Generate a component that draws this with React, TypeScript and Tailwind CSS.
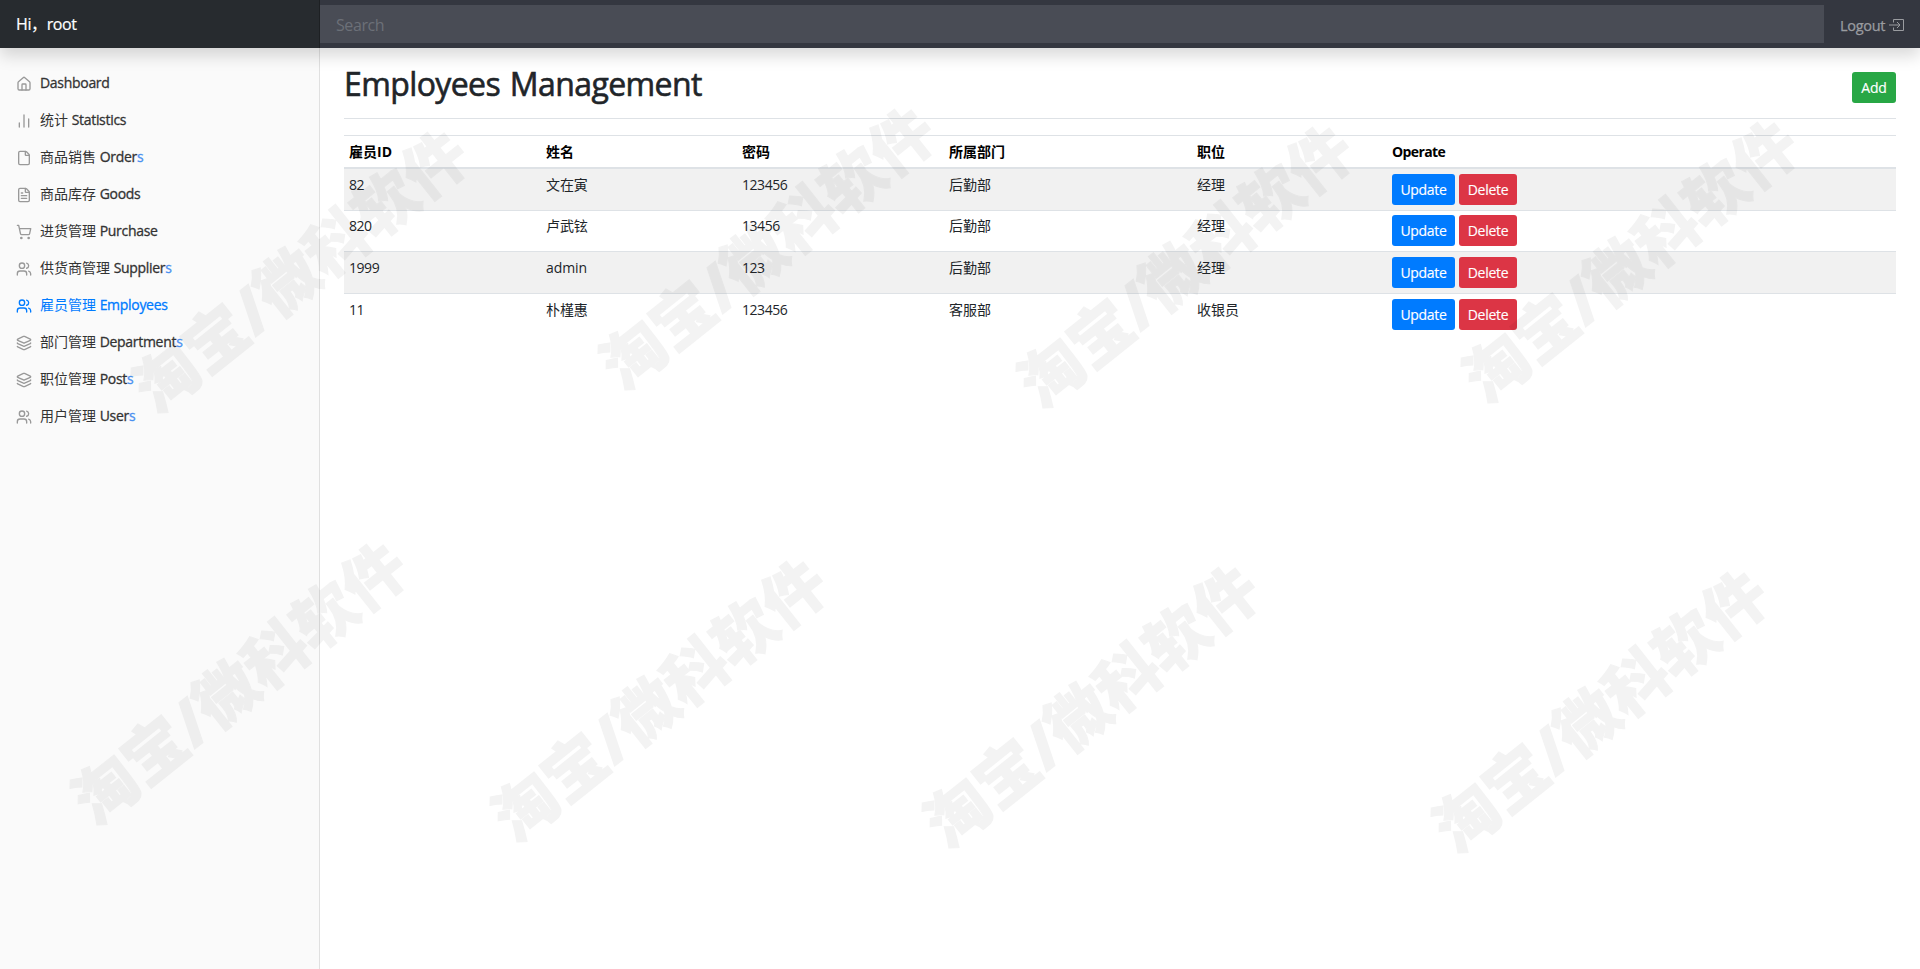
import { BarChart2, File, FileText, Home, Layers, ShoppingCart, Users } from 'lucide-react';
import clsx from 'clsx';

const NAV_ITEMS = [
  { icon: Home, zh: '', label: 'Dashboard', suffix: '' },
  { icon: BarChart2, zh: '统计', label: 'Statistics', suffix: '' },
  { icon: File, zh: '商品销售', label: 'Order', suffix: 's' },
  { icon: FileText, zh: '商品库存', label: 'Goods', suffix: '' },
  { icon: ShoppingCart, zh: '进货管理', label: 'Purchase', suffix: '' },
  { icon: Users, zh: '供货商管理', label: 'Supplier', suffix: 's' },
  { icon: Users, zh: '雇员管理', label: 'Employees', suffix: '', active: true },
  { icon: Layers, zh: '部门管理', label: 'Department', suffix: 's' },
  { icon: Layers, zh: '职位管理', label: 'Post', suffix: 's' },
  { icon: Users, zh: '用户管理', label: 'User', suffix: 's' },
];

const COLUMNS = [
  { label: '雇员ID', className: 'w-[197px]' },
  { label: '姓名', className: 'w-[196px]' },
  { label: '密码', className: 'w-[207px]' },
  { label: '所属部门', className: 'w-[248px]' },
  { label: '职位', className: 'w-[195px]' },
  { label: 'Operate', className: 'tracking-[-0.6px]' },
];

const EMPLOYEES = [
  { id: '82', name: '文在寅', password: '123456', department: '后勤部', post: '经理' },
  { id: '820', name: '卢武铉', password: '13456', department: '后勤部', post: '经理' },
  { id: '1999', name: 'admin', password: '123', department: '后勤部', post: '经理' },
  { id: '11', name: '朴槿惠', password: '123456', department: '客服部', post: '收银员' },
];

const WATERMARKS = [
  { x: 300, y: 270 },
  { x: 767, y: 247 },
  { x: 1185, y: 265 },
  { x: 1630, y: 260 },
  { x: 239, y: 682 },
  { x: 659, y: 699 },
  { x: 1091, y: 705 },
  { x: 1600, y: 710 },
];

function LogoutIcon() {
  return (
    <svg width="16" height="14" viewBox="0 0 16 14" fill="none" stroke="currentColor" strokeWidth="1">
      <path d="M4.5 4.5v-3h10v11h-10v-3" />
      <path d="M0 7h10.5M8 4l3 3-3 3" />
    </svg>
  );
}

function Header() {
  return (
    <header className="relative z-10 flex h-12 items-center bg-[#343740] shadow-[0_8px_16px_rgba(0,0,0,0.15)]">
      <div className="flex h-12 w-[320px] items-center bg-[#272b2f] px-4 text-base tracking-[-0.4px] text-white shadow-[inset_-1px_0_0_rgba(0,0,0,0.25)] [-webkit-text-stroke:0.2px]">
        Hi，root
      </div>
      <input
        type="text"
        placeholder="Search"
        className="h-[38px] flex-1 bg-[#494c55] px-4 pt-0.5 text-base tracking-[-0.4px] text-white outline-none placeholder:text-[#6c7078]"
      />
      <a
        href="#"
        className="flex w-24 items-center gap-1 pt-0.5 pl-4 text-[14.5px] tracking-[-0.3px] text-[#9a9ca0] [-webkit-text-stroke:0.25px]"
      >
        Logout
        <LogoutIcon />
      </a>
    </header>
  );
}

function Sidebar() {
  return (
    <nav className="w-[320px] bg-[#fafafa] pt-4 shadow-[inset_-1px_0_0_rgba(0,0,0,0.1)]">
      {NAV_ITEMS.map((item) => {
        const Icon = item.icon;
        return (
          <a
            key={item.label}
            href="#"
            className={clsx('flex h-[37px] items-center px-4', item.active ? 'text-[#007bff]' : 'text-[#333]')}
          >
            <Icon className={clsx('mt-0.5 mr-2 h-4 w-4', !item.active && 'text-[#999]')} />
            <span>
              {item.zh && `${item.zh} `}
              <span className="tracking-[-0.3px] [-webkit-text-stroke:0.3px]">
                {item.label}
                {item.suffix && <span className="text-[#4a90f0]">{item.suffix}</span>}
              </span>
            </span>
          </a>
        );
      })}
    </nav>
  );
}

function EmployeeTable() {
  return (
    <table className="w-full table-fixed border-separate border-spacing-0 text-left text-[#212529]">
      <thead>
        <tr className="h-[34px]">
          {COLUMNS.map((c) => (
            <th key={c.label} className={clsx('border-t border-b-2 border-[#dee2e6] px-[5px] py-0 font-bold text-black', c.className)}>
              {c.label}
            </th>
          ))}
        </tr>
      </thead>
      <tbody className="[&_td]:border-[#dee2e6] [&_td]:px-[5px] [&_td]:pb-0 [&_td]:align-top [&_tr:nth-child(odd)]:bg-[#f1f1f1] [&_tr:not(:last-child)_td]:border-b">
        {EMPLOYEES.map((e, i) => (
          <tr key={e.id} className={i === 1 ? 'h-[41px] [&_td]:pt-1' : 'h-[42px] [&_td]:pt-[5px]'}>
            <td className="tracking-[-0.45px]">{e.id}</td>
            <td className="tracking-[-0.1px]">{e.name}</td>
            <td className="tracking-[-0.45px]">{e.password}</td>
            <td>{e.department}</td>
            <td>{e.post}</td>
            <td>
              <div className="flex gap-1 tracking-[-0.3px] text-white [-webkit-text-stroke:0.15px]">
                <button type="button" className="h-[31px] w-[63px] rounded-[3px] bg-[#007bff]">
                  Update
                </button>
                <button type="button" className="h-[31px] w-[58px] rounded-[3px] bg-[#dc3545]">
                  Delete
                </button>
              </div>
            </td>
          </tr>
        ))}
      </tbody>
    </table>
  );
}

function Watermarks() {
  return (
    <div className="pointer-events-none absolute inset-0 z-20 overflow-hidden">
      {WATERMARKS.map((w) => (
        <div
          key={`${w.x}-${w.y}`}
          className="absolute -translate-x-1/2 -translate-y-1/2 -rotate-[38.5deg] text-[63px] leading-none font-black whitespace-nowrap text-black opacity-[0.045] [-webkit-text-stroke:1px]"
          style={{ left: w.x, top: w.y }}
        >
          淘宝/微科软件
        </div>
      ))}
    </div>
  );
}

export default function App() {
  return (
    <div className="relative flex h-[969px] flex-col overflow-hidden bg-white font-['Open_Sans','Noto_Sans_CJK_SC',sans-serif] text-[14px] leading-[21px]">
      <Header />
      <div className="flex flex-1">
        <Sidebar />
        <main className="flex-1 px-6 pt-4">
          <div className="mb-4 flex h-[55px] items-start justify-between border-b border-[#dee2e6]">
            <h1 className="text-[32px] leading-[40px] tracking-[-0.6px] text-[#212529] [-webkit-text-stroke:0.6px] [word-spacing:2px]">
              Employees Management
            </h1>
            <button
              type="button"
              className="mt-2 h-[31px] w-11 rounded-[3px] bg-[#28a745] tracking-[-0.2px] text-white [-webkit-text-stroke:0.15px]"
            >
              Add
            </button>
          </div>
          <EmployeeTable />
        </main>
      </div>
      <Watermarks />
    </div>
  );
}
